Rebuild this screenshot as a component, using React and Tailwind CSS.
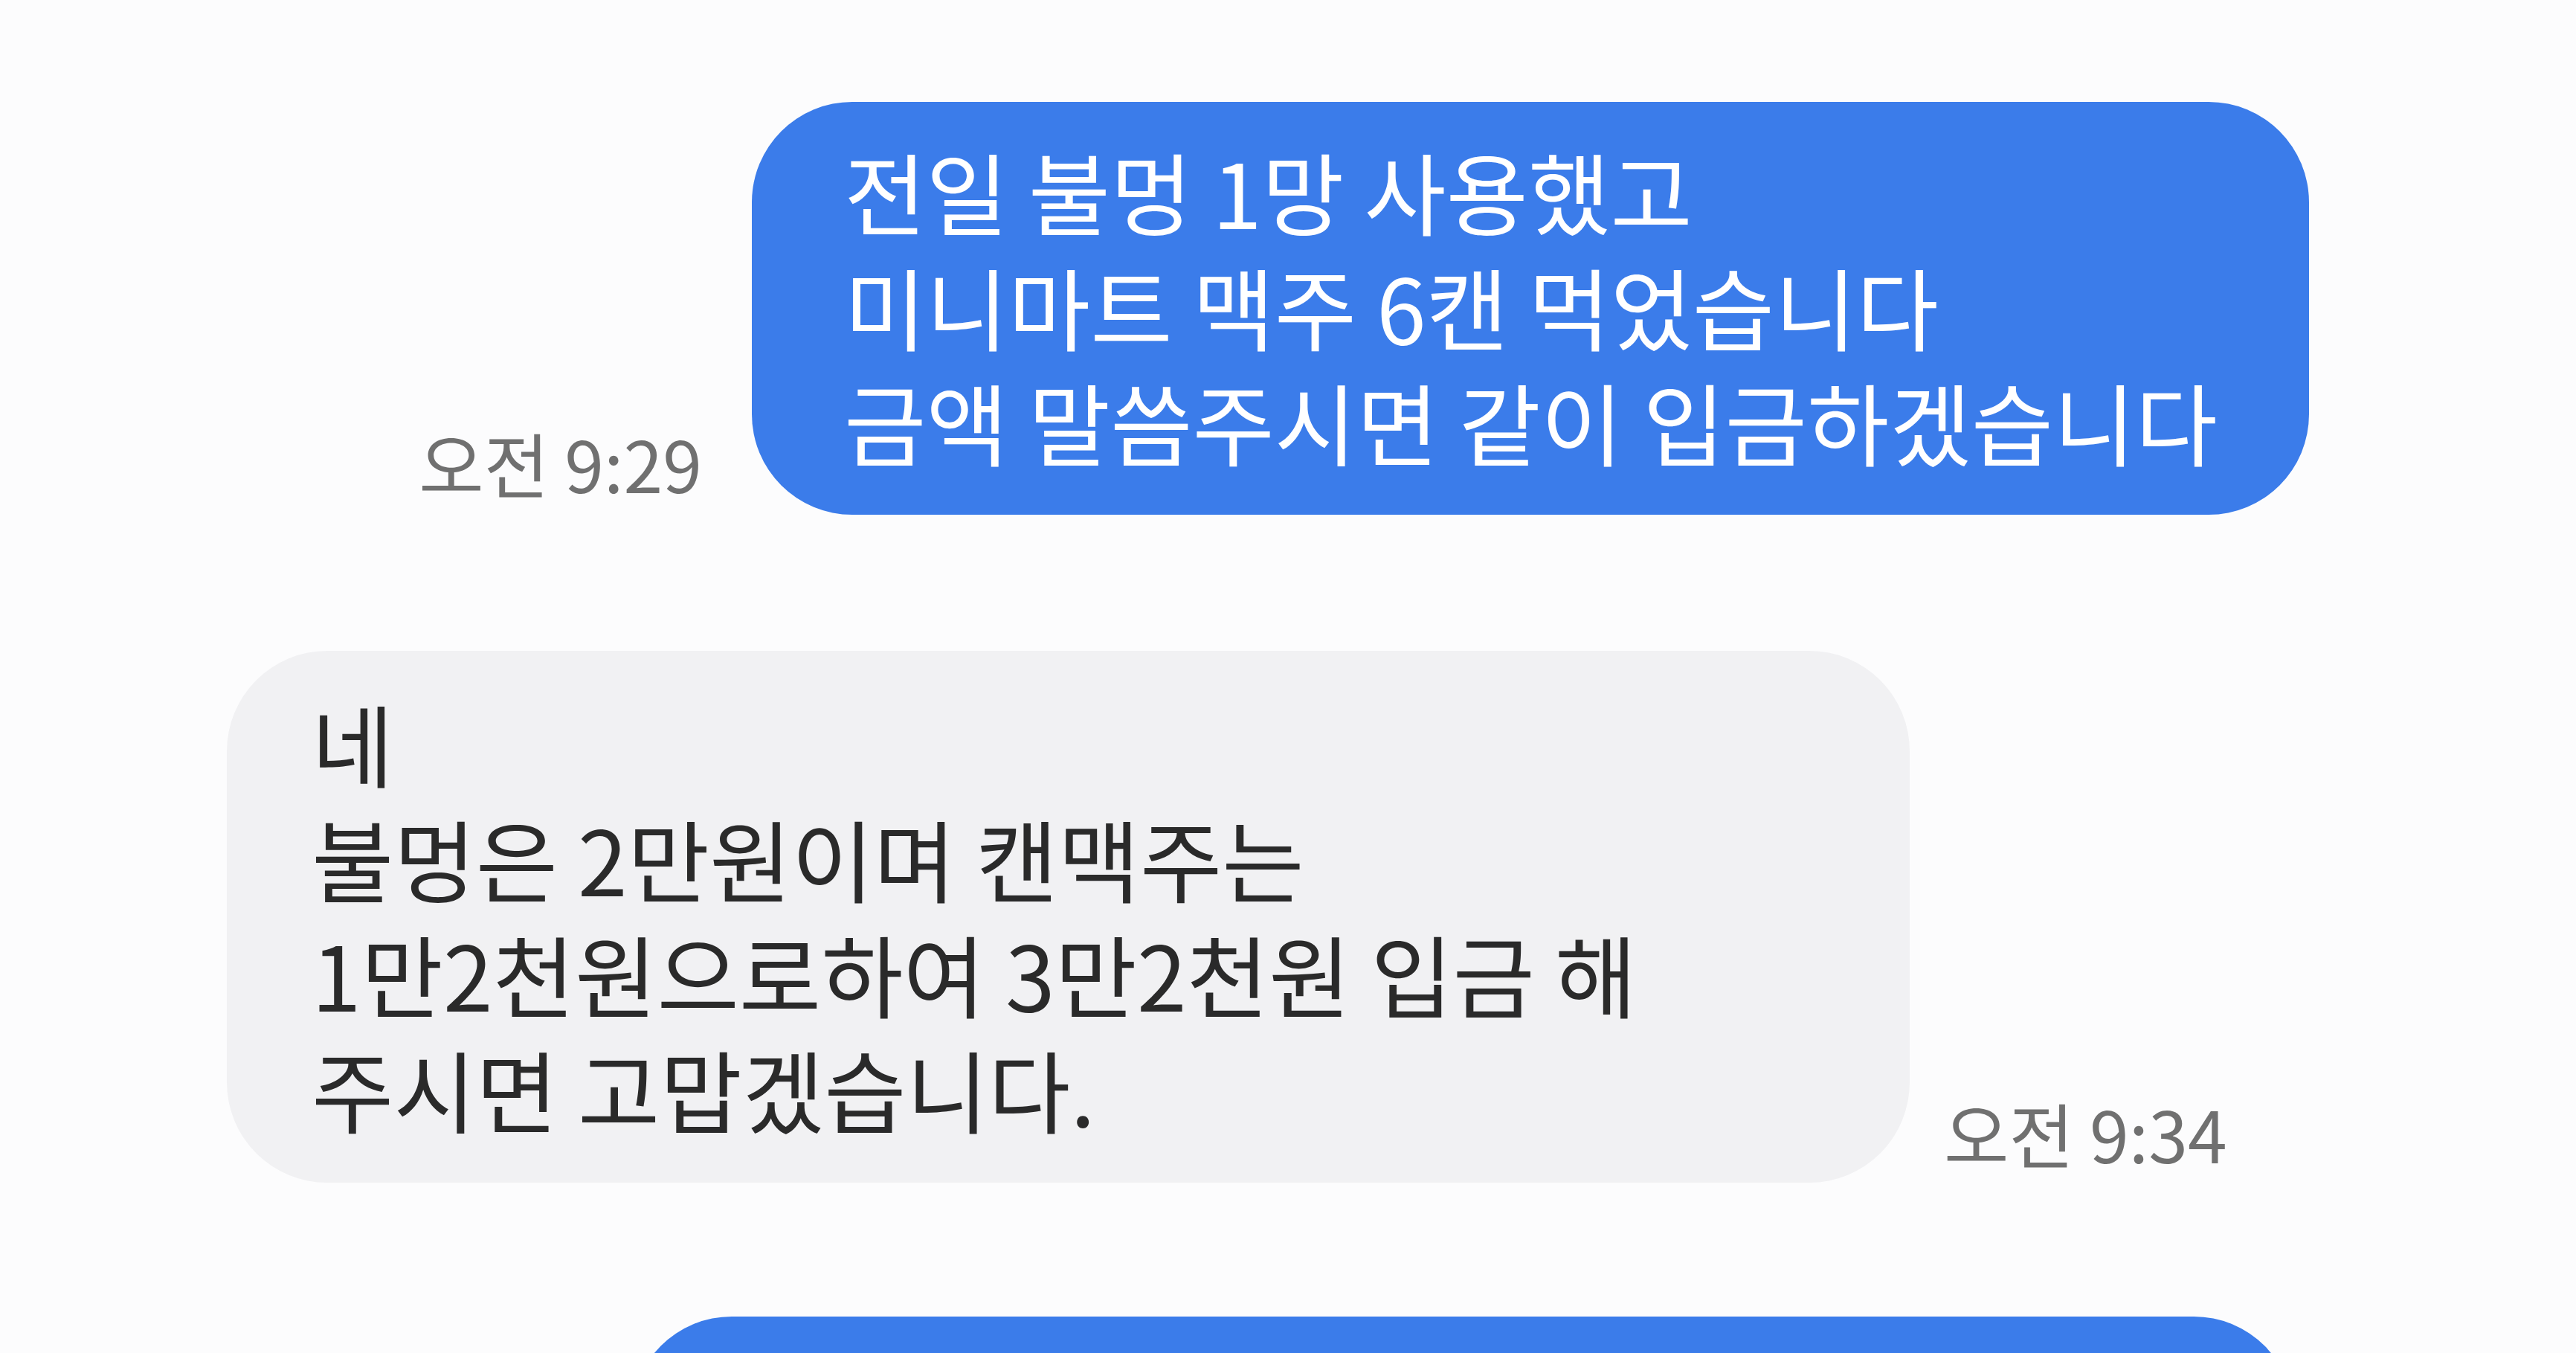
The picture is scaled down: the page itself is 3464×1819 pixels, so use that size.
const messages = [
  {
    id: 1,
    mine: true,
    time: "오전 9:29",
    lines: ["전일 불멍 1망 사용했고", "미니마트 맥주 6캔 먹었습니다", "금액 말씀주시면 같이 입금하겠습니다"],
  },
  {
    id: 2,
    mine: false,
    time: "오전 9:34",
    lines: ["네", "불멍은 2만원이며 캔맥주는", "1만2천원으로하여 3만2천원 입금 해", "주시면 고맙겠습니다."],
  },
];

function Time({ children }) {
  return (
    <span className="mb-[15px] shrink-0 text-[95px] leading-[110px] text-[#707070] whitespace-nowrap">
      {children}
    </span>
  );
}

function Bubble({ msg }) {
  if (msg.mine) {
    return (
      <div className="flex items-end justify-end pr-[359px]">
        <Time>{msg.time}</Time>
        <div className="ml-[67px] rounded-[135px] bg-[#3b7cea] pl-[124px] pr-[123px] pt-[42px] pb-[48px] text-white">
          {msg.lines.map((l, i) => (
            <p key={i} className="whitespace-nowrap">{l}</p>
          ))}
        </div>
      </div>
    );
  }

  return (
    <div className="flex items-end pl-[305px]">
      <div className="w-[2263px] rounded-[135px] bg-[#f1f1f3] pl-[114px] pr-[120px] pt-[46px] pb-[49px] text-[#2a2a2a]">
        {msg.lines.map((l, i) => (
          <p key={i} className="whitespace-nowrap">{l}</p>
        ))}
      </div>
      <div className="ml-[46px]">
        <Time>{msg.time}</Time>
      </div>
    </div>
  );
}

export default function App() {
  return (
    <div className="min-h-screen overflow-hidden bg-[#fcfcfd] pt-[137px] font-['Noto_Sans_CJK_KR','Noto_Sans',sans-serif] text-[120px] leading-[155px]">
      <div className="flex flex-col gap-[183px]">
        {messages.map((m) => (
          <Bubble key={m.id} msg={m} />
        ))}
        {/* next outgoing message, cut off by the bottom edge */}
        <div className="-mt-[3px] flex justify-end pr-[379px]">
          <div className="h-[420px] w-[2236px] rounded-[135px] bg-[#3b7cea]" />
        </div>
      </div>
    </div>
  );
}
